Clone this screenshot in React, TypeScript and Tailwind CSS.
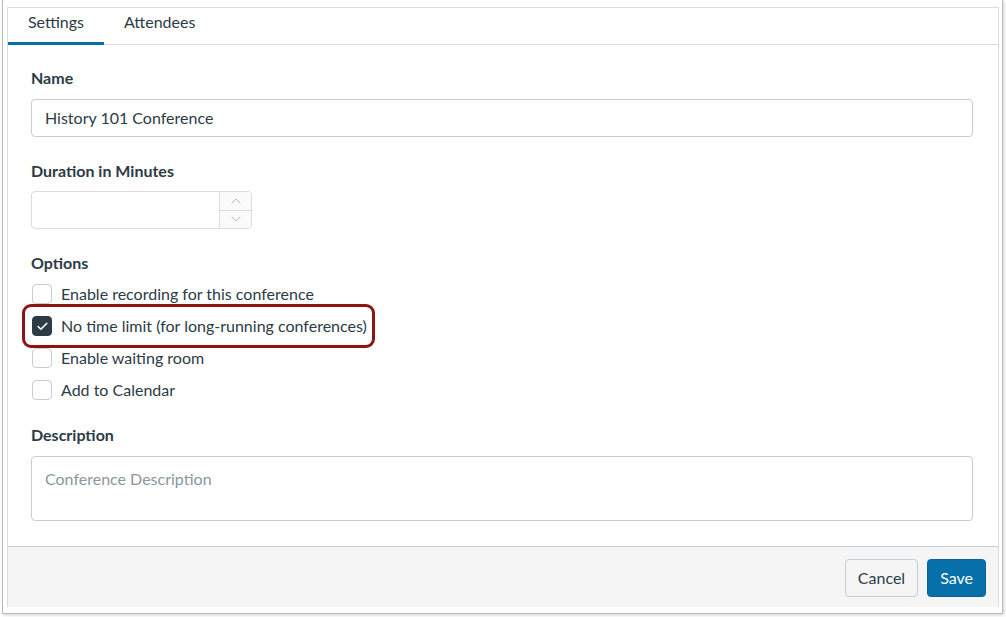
import { Check, ChevronUp, ChevronDown } from "lucide-react";

const options = [
  { label: "Enable recording for this conference", checked: false },
  { label: "No time limit (for long-running conferences)", checked: true, highlight: true },
  { label: "Enable waiting room", checked: false },
  { label: "Add to Calendar", checked: false },
];

function Checkbox({ checked }: { checked: boolean }) {
  if (checked) {
    return (
      <span className="w-5 h-5 rounded-[4px] bg-[#2d3b45] border border-[#2d3b45] flex items-center justify-center shrink-0">
        <Check className="w-[13px] h-[13px] text-white" strokeWidth={3} />
      </span>
    );
  }
  return <span className="w-5 h-5 rounded-[4px] bg-white border border-[#c7cdd1] shrink-0" />;
}

export default function App() {
  return (
    <div className="w-[1006px] h-[617px] bg-white text-[#2d3b45] font-['Lato','Noto_Sans',sans-serif] overflow-hidden">
      {/* outer frame */}
      <div className="ml-[2px] w-[1001px] h-[614px] border-x border-b border-[#bcbcbc] shadow-[1px_1px_3px_rgba(0,0,0,0.2)] pt-[7px] pl-[4px] pr-[3px] pb-[6px]">
        <div className="h-full border-t border-x border-[#dadcde] flex flex-col">
          {/* tabs */}
          <div className="flex h-[37px] border-b border-[#dadcde] text-[16px] shrink-0">
            <div className="w-[96px] flex items-center justify-center border-b-[3px] border-[#0770a8] -mb-px pb-[6px]">
              Settings
            </div>
            <div className="px-[20px] flex items-center justify-center pb-[8px]">Attendees</div>
          </div>

          {/* form */}
          <div className="flex-1 px-[23px] pt-[23px]">
            <div className="text-[16px] font-bold leading-5">Name</div>
            <div className="mt-[11px] h-[38px] w-[942px] border border-[#c7cdd1] rounded-[4px] flex items-center px-[13px] text-[16px]">
              History 101 Conference
            </div>

            <div className="mt-[24px] text-[16px] font-bold leading-5">Duration in Minutes</div>
            <div className="mt-[10px] h-[38px] w-[221px] border border-[#dadcde] rounded-[4px] flex overflow-hidden">
              <div className="flex-1" />
              <div className="w-[32px] border-l border-[#dadcde] bg-[#fafafa] flex flex-col">
                <div className="flex-1 flex items-center justify-center border-b border-[#dadcde]">
                  <ChevronUp className="w-[16px] h-[16px] text-[#a5acb2]" strokeWidth={1.2} />
                </div>
                <div className="flex-1 flex items-center justify-center">
                  <ChevronDown className="w-[16px] h-[16px] text-[#a5acb2]" strokeWidth={1.2} />
                </div>
              </div>
            </div>

            <div className="mt-[24px] text-[16px] font-bold leading-5">Options</div>
            <div className="mt-[5px] flex flex-col">
              {options.map((o) => (
                <div key={o.label} className="relative h-[32px] flex items-center gap-[9px] pl-px text-[16px]">
                  {o.highlight && (
                    <span className="absolute left-[-9px] top-[-6px] w-[353px] h-[44px] border-[3px] border-[#8e1414] rounded-[9px] pointer-events-none" />
                  )}
                  <Checkbox checked={o.checked} />
                  <span>{o.label}</span>
                </div>
              ))}
            </div>

            <div className="mt-[19px] text-[16px] font-bold leading-5">Description</div>
            <div className="mt-[11px] h-[65px] w-[942px] border border-[#c7cdd1] rounded-[4px] px-[13px] pt-[10px] text-[16px] text-[#8b969e]">
              Conference Description
            </div>
          </div>

          {/* footer */}
          <div className="h-[61px] shrink-0 bg-[#f5f5f5] border-t border-[#c7cdd1] flex items-center justify-end gap-[9px] pr-[12px] pt-[2px]">
            <button className="h-[38px] px-[12px] rounded-[4px] border border-[#c7cdd1] bg-[#f5f5f5] text-[16px] text-[#2d3b45]">
              Cancel
            </button>
            <button className="h-[38px] px-[12px] rounded-[4px] border border-[#0762a0] bg-[#0770a8] text-[16px] text-white">
              Save
            </button>
          </div>
        </div>
      </div>
    </div>
  );
}
